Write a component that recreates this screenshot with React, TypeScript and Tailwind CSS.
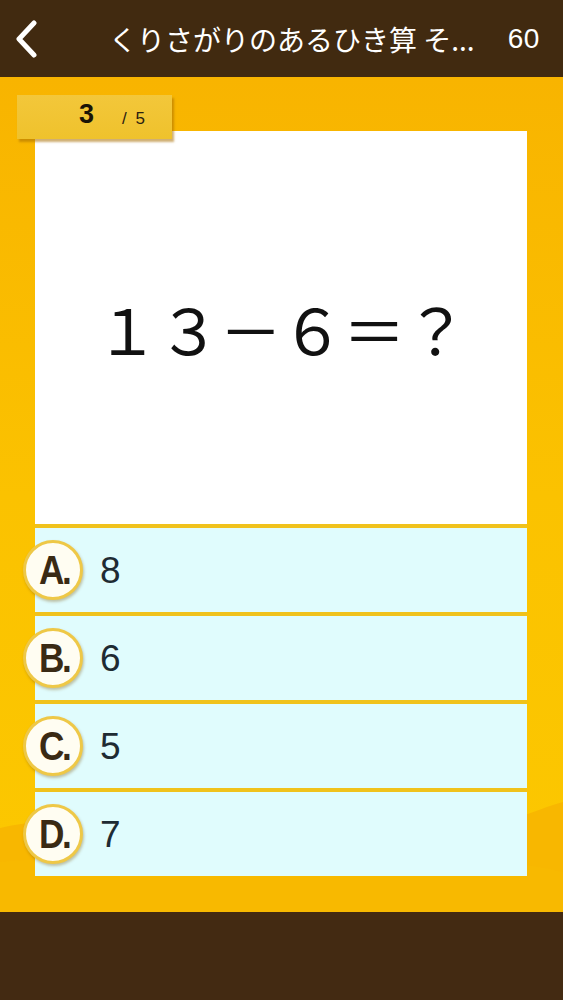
import React from 'react';

const answers = [
  { key: 'A', value: '8' },
  { key: 'B', value: '6' },
  { key: 'C', value: '5' },
  { key: 'D', value: '7' },
];

const jp = { fontFamily: '"Noto Sans CJK JP", "Noto Sans", sans-serif' };
const latin = { fontFamily: '"Liberation Sans", Arial, sans-serif' };

const AnswerRow: React.FC<{ letter: string; value: string }> = ({ letter, value }) => (
  <div className="border-t-4 border-[#f0c21c] h-[88px]">
    <div className="h-[84px] bg-[#e0fcfd] flex items-center">
      {/* Letter badge */}
      <div className="-ml-[12px] w-[60px] h-[60px] rounded-full bg-[#fffdf2] border-[3px] border-[#eec847] shadow-[1px_2px_3px_rgba(120,80,0,0.35)] flex items-center justify-center shrink-0">
        <span className="text-[40px] font-bold text-[#3a2a14] leading-none tracking-[-0.07em] scale-x-[0.88] -mt-[1px] ml-[2px]" style={latin}>
          {letter}.
        </span>
      </div>
      <span className="ml-[17px] text-[37px] text-[#1e2b33] leading-none" style={latin}>
        {value}
      </span>
    </div>
  </div>
);

export default function App() {
  return (
    <div className="w-[563px] h-[1000px] flex flex-col overflow-hidden">
      {/* Header */}
      <div className="h-[77px] bg-[#412a10] flex items-center shrink-0">
        <svg width="26" height="38" viewBox="0 0 26 38" className="ml-[13px] shrink-0">
          <path d="M21 3 L6 19 L21 35" fill="none" stroke="white" strokeWidth="5" strokeLinecap="round" strokeLinejoin="round" />
        </svg>
        <div className="ml-[70px] text-white text-[28px] leading-none whitespace-nowrap" style={jp}>
          くりさがりのあるひき算 そ...
        </div>
        <div className="ml-auto mr-[23px] text-white text-[28px] leading-none tracking-[0.02em]" style={latin}>
          60
        </div>
      </div>

      {/* Main */}
      <div className="relative h-[835px] shrink-0 bg-gradient-to-b from-[#f8b400] via-[#fbc200] to-[#fcc800] overflow-hidden">
        {/* Background waves */}
        <svg className="absolute left-0 bottom-0" width="563" height="120" viewBox="0 0 563 120" preserveAspectRatio="none">
          <path d="M0 36 C 60 20, 120 40, 200 60 C 320 90, 420 60, 480 40 C 520 25, 545 15, 563 10 L563 120 L0 120 Z" fill="#f8b700" />
          <path d="M0 70 C 100 60, 250 85, 380 70 C 460 62, 520 70, 563 80 L563 120 L0 120 Z" fill="#f8b900" />
        </svg>

        <div className="relative pt-[54px] px-[35px]">
          {/* Progress badge */}
          <div className="absolute left-[17px] top-[18px] w-[155px] h-[44px] bg-gradient-to-b from-[#f3c73a] to-[#efc22c] shadow-[2px_3px_2px_rgba(170,110,0,0.55)] z-10 flex items-end pb-[11px]">
            <span className="ml-[62px] text-[27px] font-bold text-[#1a1306] leading-none" style={latin}>3</span>
            <span className="ml-[28px] text-[17px] text-[#2a2010] leading-none mb-[1px] tracking-[0.12em]" style={latin}>/ 5</span>
          </div>

          {/* Card */}
          <div className="w-[492px] flex flex-col">
            <div className="h-[393px] bg-white flex items-center justify-center">
              <span className="text-[63px] text-[#111] leading-none tracking-[-0.02em]" style={jp}>
                １３－６＝？
              </span>
            </div>
            {answers.map((a) => (
              <AnswerRow key={a.key} letter={a.key} value={a.value} />
            ))}
          </div>
        </div>
      </div>

      {/* Footer */}
      <div className="flex-1 bg-[#432a12]" />
    </div>
  );
}
